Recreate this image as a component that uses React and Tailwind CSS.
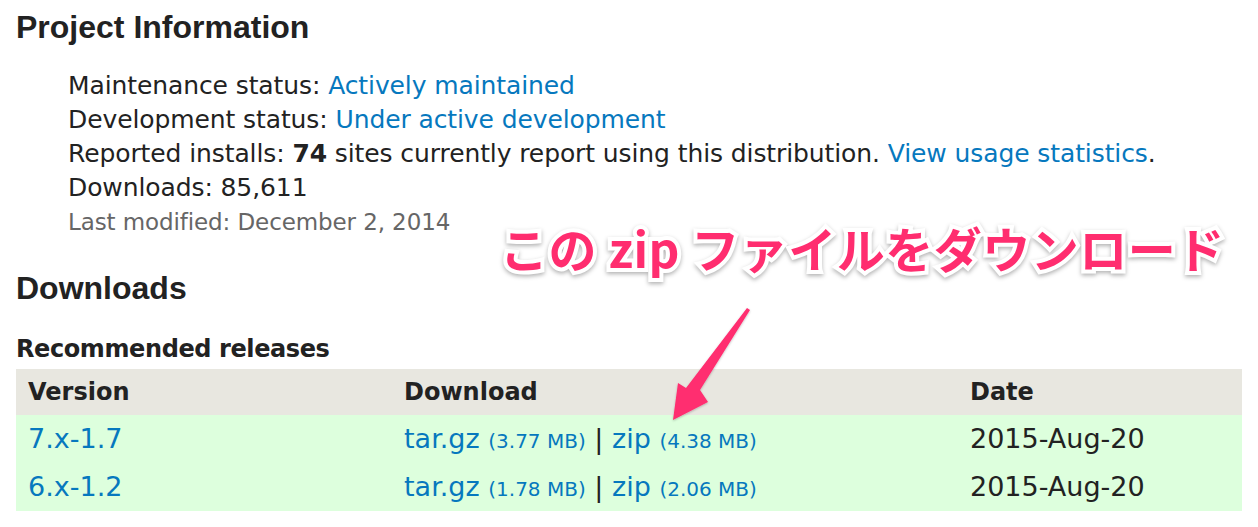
import React from 'react';

const releases = [
  { version: '7.x-1.7', tar: '3.77 MB', zip: '4.38 MB', date: '2015-Aug-20' },
  { version: '6.x-1.2', tar: '1.78 MB', zip: '2.06 MB', date: '2015-Aug-20' },
];

const body = { fontFamily: '"DejaVu Sans", "Liberation Sans", sans-serif' };
const head = { fontFamily: '"Liberation Sans", Arial, sans-serif' };

const Arrow = () => (
  <svg className="absolute left-[660px] top-[300px]" width="100" height="130" viewBox="0 0 100 130">
    <defs>
      <filter id="sh" x="-20%" y="-20%" width="140%" height="140%">
        <feDropShadow dx="0" dy="1" stdDeviation="1.2" floodColor="#000" floodOpacity="0.25" />
      </filter>
    </defs>
    <path
      d="M87 8 L90 10 L40 90 L48 102 L13 120 L18 83 L26 88 Z"
      fill="#ff2d6f"
      filter="url(#sh)"
    />
  </svg>
);

const App = () => {
  return (
    <div className="relative w-[1258px] h-[527px] bg-white overflow-hidden text-[#222]" style={body}>
      <div className="px-4 pt-[8px]">
        <h2 className="text-[32px] font-bold leading-[38px]" style={head}>Project Information</h2>

        <div className="pl-[52px] pt-[23px] text-[25px] leading-[34px] tracking-[-0.1px]">
          <div>Maintenance status: <a className="text-[#0678be]">Actively maintained</a></div>
          <div>Development status: <a className="text-[#0678be]">Under active development</a></div>
          <div>
            Reported installs: <b>74</b> sites currently report using this distribution.{' '}
            <a className="text-[#0678be]">View usage statistics</a>.
          </div>
          <div>Downloads: 85,611</div>
          <div className="text-[23px] leading-[34px] text-[#666]">Last modified: December 2, 2014</div>
        </div>

        <h2 className="mt-[30px] text-[32px] font-bold leading-[38px]" style={head}>Downloads</h2>

        <h3 className="mt-[27px] text-[24px] font-bold leading-[30px] tracking-[-0.4px]">Recommended releases</h3>

        <table className="mt-[5px] w-[1226px] border-collapse">
          <thead>
            <tr className="bg-[#e8e7e0] h-[46px] text-[24px]">
              <th className="w-[376px] px-3 text-left font-bold">Version</th>
              <th className="w-[566px] px-3 text-left font-bold">Download</th>
              <th className="px-3 text-left font-bold">Date</th>
            </tr>
          </thead>
          <tbody className="text-[27px]">
            {releases.map((r) => (
              <tr key={r.version} className="bg-[#ddffdd] h-[48px]">
                <td className="px-3"><a className="text-[#0678be]">{r.version}</a></td>
                <td className="px-3">
                  <a className="text-[#0678be]">tar.gz <span className="text-[20px]">({r.tar})</span></a>
                  {' | '}
                  <a className="text-[#0678be]">zip <span className="text-[20px]">({r.zip})</span></a>
                </td>
                <td className="px-3">{r.date}</td>
              </tr>
            ))}
          </tbody>
        </table>
      </div>

      <div
        className="absolute left-[500px] top-[215px] text-[48px] font-bold leading-[64px] text-[#ff2d6f] whitespace-nowrap tracking-[0.5px] [-webkit-text-stroke:8px_white] [paint-order:stroke_fill] [filter:drop-shadow(0_2px_2px_rgba(0,0,0,0.3))]"
        style={{ fontFamily: '"Noto Sans CJK JP", "Liberation Sans", sans-serif' }}
      >
        この zip ファイルをダウンロード
      </div>

      <Arrow />
    </div>
  );
};

export default App;
